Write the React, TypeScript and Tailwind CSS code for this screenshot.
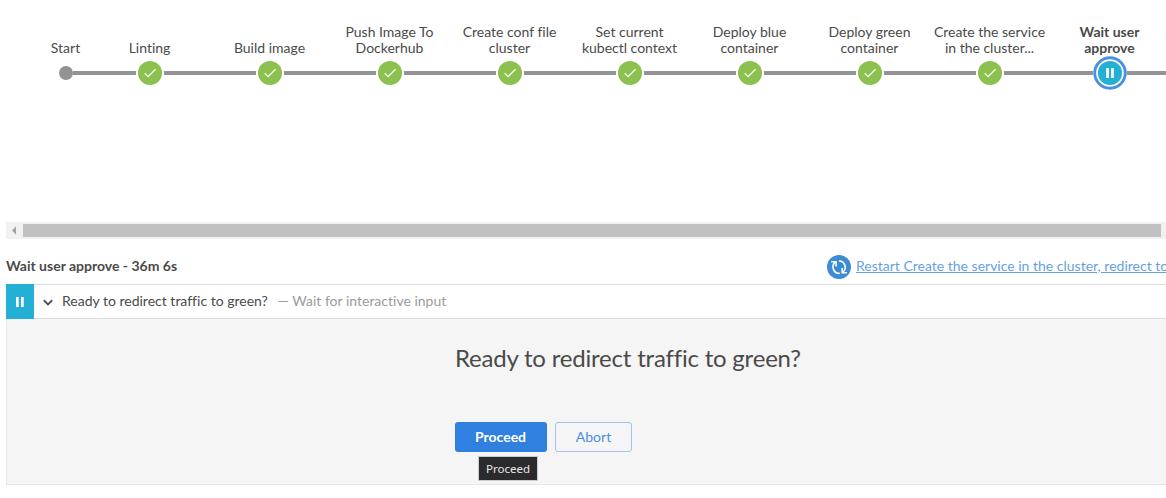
import React from "react";

const stages = [
  ["Linting"],
  ["Build image"],
  ["Push Image To", "Dockerhub"],
  ["Create conf file", "cluster"],
  ["Set current", "kubectl context"],
  ["Deploy blue", "container"],
  ["Deploy green", "container"],
  ["Create the service", "in the cluster..."],
];

function Label({ lines, bold }: { lines: string[]; bold?: boolean }) {
  return (
    <div
      className={
        "flex h-[56px] flex-col items-center justify-end pr-[1px] text-center text-[14px] leading-[16px] whitespace-nowrap " +
        (bold ? "font-bold" : "")
      }
    >
      {lines.map((line) => (
        <div key={line}>{line}</div>
      ))}
    </div>
  );
}

function Line() {
  return <div className="h-[3.5px] flex-1 bg-[#949393]" />;
}

function Success() {
  return (
    <svg className="mx-[2px] block size-6 shrink-0" viewBox="0 0 24 24">
      <circle cx="12" cy="12" r="12" fill="#8cc04f" />
      <path d="M6.700 12.200l3.400 3.400 7.500-7.400" fill="none" stroke="#fff" strokeWidth="1.200" />
    </svg>
  );
}

function Paused() {
  return (
    <svg className="block h-[34px] w-[34px] shrink-0" viewBox="0 0 34 34">
      <circle cx="17" cy="17" r="15.3" fill="#fff" stroke="#4a90e2" strokeWidth="2.9" />
      <circle cx="17" cy="17" r="12.1" fill="#24b0d5" />
      <path d="M13.200 12h2.700v10h-2.700zM18.100 12h2.700v10h-2.700z" fill="#fff" />
    </svg>
  );
}

function Pipeline() {
  return (
    <div className="flex h-[222px] w-[1200px] shrink-0 pl-[42px]">
      <div className="w-12 shrink-0">
        <Label lines={["Start"]} />
        <div className="flex h-[34px] items-center pl-[17px]">
          <div className="size-[14px] shrink-0 rounded-full bg-[#949393]" />
          <Line />
        </div>
      </div>
      {stages.map((lines) => (
        <div key={lines.join(" ")} className="w-[120px] shrink-0">
          <Label lines={lines} />
          <div className="flex h-[34px] items-center">
            <Line />
            <Success />
            <Line />
          </div>
        </div>
      ))}
      <div className="w-[120px] shrink-0">
        <Label lines={["Wait user", "approve"]} bold />
        <div className="flex h-[34px] items-center">
          <Line />
          <Paused />
          <Line />
        </div>
      </div>
    </div>
  );
}

export default function App() {
  return (
    <div className="h-[498px] w-full overflow-hidden bg-white font-['Lato',sans-serif] text-[14px] text-[#4a4a4a] [font-variant-ligatures:none]">
      <Pipeline />
      <div className="ml-[6px] flex h-[17px] items-center bg-[#f1f1f1]">
        <svg className="h-[17px] w-[17px] shrink-0" viewBox="0 0 17 17">
          <path d="M10 4.500v8L6 8.500z" fill="#a0a0a0" />
        </svg>
        <div className="mr-[5px] h-[13px] flex-1 bg-[#c1c1c1]" />
      </div>
      <div className="flex h-[45px] items-center pt-[10px] pl-[6px] whitespace-nowrap">
        <div className="w-[821px] shrink-0 pb-[2px] font-bold">Wait user approve - 36m 6s</div>
        <svg className="mr-[5px] size-6 shrink-0" viewBox="0 0 24 24">
          <circle cx="12" cy="12" r="12" fill="#3b8cd3" />
          <g fill="none" stroke="#fff" strokeWidth="1.600">
            <path d="M12 6A6.200 6.200 0 0 1 15.200 17.500M20 17.700h-4.800v-4.700" />
            <path d="M12.800 18.300A6.200 6.200 0 0 1 8.900 6.900M4.200 6.700h4.900v4.700" />
          </g>
        </svg>
        <div className="shrink-0 pb-[2px] text-[#68a1df] underline">
          Restart Create the service in the cluster, redirect to
        </div>
      </div>
      <div className="ml-[6px] flex h-[35px]">
        <div className="flex w-7 items-center justify-center bg-[#24b0d5]">
          <svg className="h-[12px] w-[10px]" viewBox="0 0 10 12">
            <path d="M1 1h2.700v10H1zM6 1h2.700v10H6z" fill="#fff" />
          </svg>
        </div>
        <div className="flex flex-1 items-center border-t border-b border-[#dedede] pl-[9px]">
          <svg className="mr-[9px] h-[10px] w-[10px]" viewBox="0 0 10 10">
            <path d="M.8 3.200L5 7.400l4.200-4.200" fill="none" stroke="#4a4a4a" strokeWidth="1.8" />
          </svg>
          <span className="pb-[2px]">Ready to redirect traffic to green?</span>
          <span className="ml-[10px] pb-[2px] text-[#9b9b9b]">— Wait for interactive input</span>
        </div>
      </div>
      <div className="ml-[6px] h-[166px] border-b border-l border-[#e8e8e8] bg-[#f5f5f5] pt-[24px] pl-[448px]">
        <div className="text-[24px] leading-[30px] tracking-[-0.2px]">Ready to redirect traffic to green?</div>
        <div className="mt-[49px] flex gap-2">
          <div className="relative">
            <button className="h-[30px] w-[92px] rounded-[3px] bg-[#3080df] pr-[1px] pb-[2px] font-bold text-white">Proceed</button>
            <div className="absolute top-[34px] left-[23px] flex h-[25px] w-[60px] items-center justify-center border border-[#cccccc] bg-[#2b2b2e] font-['Noto_Sans',sans-serif] text-[11.500px] text-[#e8e8e8]">
              Proceed
            </div>
          </div>
          <button className="h-[30px] w-[77px] rounded-[3px] border border-[#a0c4ee] pb-[2px] text-[#4a90e2]">Abort</button>
        </div>
      </div>
    </div>
  );
}
